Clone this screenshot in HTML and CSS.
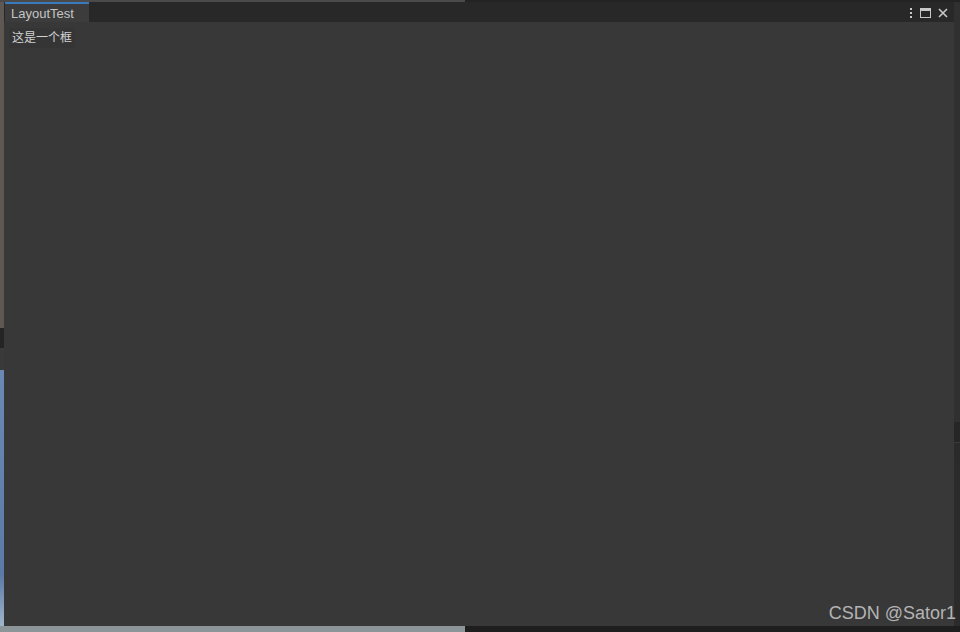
FILE: index.html
```html
<!DOCTYPE html>
<html lang="zh">
<head>
    <meta charset="UTF-8">
    <title>LayoutTest</title>
    <link rel="stylesheet" href="styles.css">
</head>
<body>
    <div class="top-strip">
        <div class="top-left"></div>
        <div class="top-right"></div>
    </div>
    <div class="main-row">
        <div class="side-left">
            <div class="sl-a"></div>
            <div class="sl-b"></div>
            <div class="sl-c"></div>
            <div class="sl-d"></div>
        </div>
        <div class="editor-window">
            <div class="tab-bar">
                <div class="tab">LayoutTest</div>
                <div class="tab-tools">
                    <svg width="4" height="10" viewBox="0 0 4 10"><rect x="1" y="0" width="2" height="2" fill="#c8c8c8"/><rect x="1" y="4" width="2" height="2" fill="#c8c8c8"/><rect x="1" y="8" width="2" height="2" fill="#c8c8c8"/></svg>
                    <svg width="11" height="10" viewBox="0 0 11 10"><rect x="0.5" y="0.5" width="10" height="9" fill="none" stroke="#c8c8c8"/><rect x="0" y="0" width="11" height="3" fill="#c8c8c8"/></svg>
                    <svg width="10" height="10" viewBox="0 0 10 10"><path d="M1 1L9 9M9 1L1 9" stroke="#c8c8c8" stroke-width="1.6"/></svg>
                </div>
            </div>
            <div class="content">
                <div class="box-label">这是一个框</div>
            </div>
        </div>
        <div class="side-right">
            <div class="sr-a"></div>
            <div class="sr-b"></div>
            <div class="sr-c"></div>
            <div class="sr-d"></div>
        </div>
    </div>
    <div class="bottom-strip">
        <div class="bottom-left"></div>
        <div class="bottom-right"></div>
    </div>
    <div class="watermark">CSDN @Sator1</div>
</body>
</html>
```

FILE: styles.css
```css
body {
    margin: 0;
    width: 960px;
    height: 632px;
    overflow: hidden;
    background-color: #383838;
    font-family: "Liberation Sans", "Noto Sans CJK SC", sans-serif;
    position: relative;
}

.top-strip{
    display: flex;
    height: 2px;
}
.top-left{
    width: 465px;
    background-color: #4a4a4a;
}
.top-right{
    flex: 1;
    background-color: #232323;
}

.main-row{
    display: flex;
    height: 624px;
}

.side-left{
    width: 4px;
    display: flex;
    flex-direction: column;
}
.sl-a{ height: 326px; background-color: #5e5852; }
.sl-b{ height: 20px; background-color: #242424; }
.sl-c{ height: 22px; background-color: #3a3a3a; }
.sl-d{ flex: 1; background: linear-gradient(#6a8ab5, #5b7aa6 80%, #9fb5c9); }

.editor-window{
    flex: 1;
    display: flex;
    flex-direction: column;
}

.tab-bar{
    height: 20px;
    background-color: #282828;
    display: flex;
    justify-content: space-between;
    align-items: stretch;
}
.tab{
    width: 84px;
    margin-left: 1px;
    background-color: #3c3c3c;
    border-top: 2px solid #3a79bb;
    color: #c4c4c4;
    font-size: 13px;
    padding-left: 6px;
    padding-top: 2px;
    line-height: 16px;
    box-sizing: border-box;
}
.tab-tools{
    display: flex;
    align-items: center;
    gap: 7px;
    padding-right: 6px;
    padding-top: 1px;
}

.content{
    flex: 1;
    background-color: #383838;
    padding: 6px 5px;
}
.box-label{
    display: inline-block;
    background-color: #353535;
    color: #d2d2d2;
    font-size: 12px;
    padding: 2px 3px;
    line-height: 16px;
    margin-left: 0;
}

.side-right{
    width: 6px;
    display: flex;
    flex-direction: column;
    background-color: #2d2d2d;
}
.sr-a{ height: 420px; background-color: #303030; }
.sr-b{ height: 20px; background-color: #262626; }
.sr-c{ height: 20px; background-color: #2a2a2a; border-top: 1px solid #3a3a3a; }
.sr-d{ flex: 1; background-color: #2b2b2b; }

.bottom-strip{
    display: flex;
    height: 6px;
}
.bottom-left{
    width: 465px;
    background-color: #8c9698;
}
.bottom-right{
    flex: 1;
    background-color: #1e1e1e;
}

/* watermark */
.watermark{
    position: absolute;
    right: 4px;
    bottom: 8px;
    color: #b4b4b4;
    font-size: 18px;
    font-family: "Liberation Sans", sans-serif;
}
```
